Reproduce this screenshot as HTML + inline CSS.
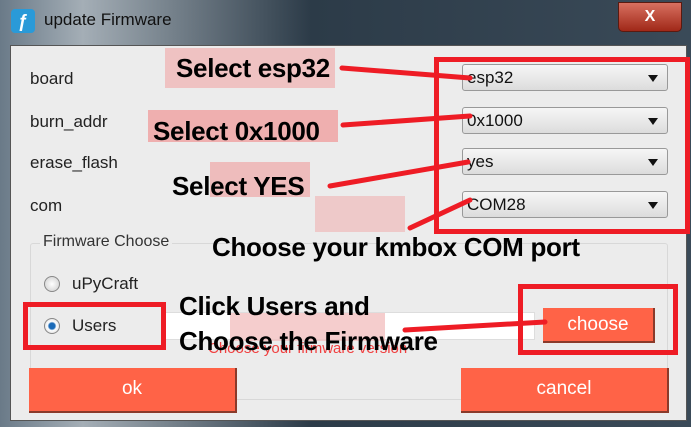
<!DOCTYPE html>
<html><head><meta charset="utf-8"><style>
*{margin:0;padding:0;box-sizing:border-box}
body{width:691px;height:427px;overflow:hidden;background:#2a3a4a;font-family:"Liberation Sans",sans-serif;position:relative}
.frame{position:absolute;left:0;top:0;width:691px;height:427px;background:linear-gradient(90deg,#6a7a88 0%,#a4aeb6 12%,#2c3b48 45%,#3a4a58 100%)}
.ab{position:absolute}
.inner{left:10px;top:45px;width:677px;height:376px;background:#ececec;border:1px solid #555}
.lbl{font-size:17px;color:#222}
.combo{position:absolute;left:462px;width:206px;height:27px;border:1px solid #999;border-radius:3px;background:linear-gradient(#f6f6f6,#dcdcdc);font-size:17px;padding:3px 0 0 4px;color:#111}
.combo:after{content:"";position:absolute;right:9px;top:10px;border-left:5px solid transparent;border-right:5px solid transparent;border-top:7px solid #111}
.btn{position:absolute;background:#ff6347;color:#fff;font-size:19px;text-align:center;border-right:2px solid #8a3a2a;border-bottom:2px solid #8a3a2a}
.ann{position:absolute;font-weight:bold;font-size:26px;color:#000;white-space:nowrap;letter-spacing:-0.3px}
.rb{position:absolute;border:5px solid #ee1c25}
.radio{position:absolute;width:16px;height:16px;border-radius:50%;border:1px solid #888;background:radial-gradient(#fff,#ccc)}
</style></head><body>
<div class="frame"></div>
<div class="ab" style="left:11px;top:9px;width:24px;height:24px;background:#2a9ad8;border-radius:4px;color:#fff;font-weight:bold;font-size:18px;text-align:center;line-height:24px">ƒ</div>
<div class="ab" style="left:44px;top:10px;font-size:17px;color:#111">update Firmware</div>
<div class="ab" style="left:618px;top:2px;width:64px;height:30px;background:linear-gradient(#d87060,#a02818);border:1px solid #5a1a10;border-radius:0 0 5px 5px;color:#fff;font-weight:bold;text-align:center;font-size:16px;line-height:28px">X</div>
<div class="ab inner"></div>
<div class="ab" style="left:165px;top:48px;width:170px;height:40px;background:#f0b8b8;opacity:.8"></div>
<div class="ab" style="left:148px;top:110px;width:190px;height:32px;background:#f0a0a0;opacity:.8"></div>
<div class="ab" style="left:210px;top:162px;width:100px;height:35px;background:#efb0b0;opacity:.8"></div>
<div class="ab" style="left:315px;top:196px;width:90px;height:36px;background:#efc0c0;opacity:.8"></div>
<div class="ab lbl" style="left:30px;top:69px">board</div>
<div class="ab lbl" style="left:30px;top:112px">burn_addr</div>
<div class="ab lbl" style="left:30px;top:153px">erase_flash</div>
<div class="ab lbl" style="left:30px;top:196px">com</div>
<div class="combo" style="top:64px">esp32</div>
<div class="combo" style="top:107px">0x1000</div>
<div class="combo" style="top:148px">yes</div>
<div class="combo" style="top:191px">COM28</div>
<div class="ab" style="left:30px;top:243px;width:638px;height:157px;border:1px solid #d8d8d8;border-radius:3px"></div>
<div class="ab lbl" style="left:40px;top:233px;background:#ececec;padding:0 3px;font-size:16px;color:#333">Firmware Choose</div>
<div class="radio" style="left:44px;top:276px"></div>
<div class="ab lbl" style="left:72px;top:274px">uPyCraft</div>
<div class="radio" style="left:44px;top:318px;background:radial-gradient(#1a6ab8 30%,#fff 45%,#ccc)"></div>
<div class="ab lbl" style="left:72px;top:316px">Users</div>
<div class="ab" style="left:165px;top:312px;width:370px;height:28px;background:#fff;border:1px solid #ddd"></div>
<div class="ab" style="left:230px;top:313px;width:155px;height:28px;background:#f3c0c0;opacity:.8"></div>
<div class="ab" style="left:208px;top:340px;font-size:15px;color:#f04040">Choose your firmware version</div>
<div class="btn" style="left:543px;top:308px;width:112px;height:35px;line-height:33px">choose</div>
<div class="btn" style="left:29px;top:368px;width:208px;height:45px;line-height:42px">ok</div>
<div class="btn" style="left:461px;top:368px;width:208px;height:45px;line-height:42px">cancel</div>
<div class="rb" style="left:434px;top:57px;width:256px;height:177px"></div>
<div class="rb" style="left:23px;top:302px;width:143px;height:48px"></div>
<div class="rb" style="left:518px;top:284px;width:160px;height:71px"></div>
<svg class="ab" style="left:0;top:0" width="691" height="427"><g stroke="#ee1c25" stroke-width="5" stroke-linecap="round" fill="none">
<path d="M342 68 L470 78"/><path d="M343 125 L470 116"/><path d="M330 186 L468 162"/><path d="M410 228 L470 200"/><path d="M405 330 L545 322"/></g></svg>
<div class="ann" style="left:176px;top:53px">Select esp32</div>
<div class="ann" style="left:153px;top:116px">Select 0x1000</div>
<div class="ann" style="left:172px;top:171px">Select YES</div>
<div class="ann" style="left:212px;top:232px">Choose your kmbox COM port</div>
<div class="ann" style="left:179px;top:291px">Click Users and</div>
<div class="ann" style="left:179px;top:326px">Choose the Firmware</div>
</body></html>
